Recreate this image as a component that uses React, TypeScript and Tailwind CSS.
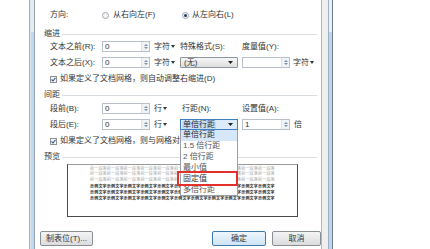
import React from "react";

const FONT = '"Liberation Sans","Noto Sans CJK SC",sans-serif';

function Spin() {
  return (
    <div className="ml-auto h-full w-[8px] border-l border-[#dde2e8] bg-[#f1f4f7] flex flex-col items-center justify-center gap-[1px]">
      <svg width="4" height="2" viewBox="0 0 4 2">
        <path d="M0 2 L2 0 L4 2Z" fill="#7d90a8" />
      </svg>
      <svg width="4" height="2" viewBox="0 0 4 2">
        <path d="M0 0 L2 2 L4 0Z" fill="#7d90a8" />
      </svg>
    </div>
  );
}

function Num({ v }: { v: string }) {
  return (
    <div className="w-[48px] h-full shrink-0 flex items-center border border-[#b9c0ca] bg-white pl-[2px]">
      <span className="leading-none">{v}</span>
      <Spin />
    </div>
  );
}

function Unit({ t }: { t: string }) {
  return (
    <span className="flex items-center leading-none">
      {t}
      <svg width="4" height="3" viewBox="0 0 4 3" className="ml-[1px]">
        <path d="M0 0H4L2 3Z" fill="#333" />
      </svg>
    </span>
  );
}

function Arrow() {
  return (
    <svg width="5" height="3" viewBox="0 0 5 3" className="ml-auto mr-[4px]">
      <path d="M0 0H5L2.5 3Z" fill="#222" />
    </svg>
  );
}

function Header({ t }: { t: string }) {
  return (
    <div className="flex items-center h-[8px] pl-[9px] pr-[4px] leading-none">
      <span>{t}</span>
      <div className="flex-1 h-px bg-[#d8dde2] ml-[2px]" />
    </div>
  );
}

function Check({ t }: { t: string }) {
  return (
    <div className="flex items-center h-[8px] pl-[15px] leading-none whitespace-nowrap">
      <div className="w-[7px] h-[7px] border border-[#8e9196] bg-[#f4f6f8] flex items-center justify-center">
        <svg width="5" height="5" viewBox="0 0 5 5">
          <path d="M0.5 2.5 L2 4 L4.5 0.8" stroke="#3d5a80" strokeWidth="1.1" fill="none" />
        </svg>
      </div>
      <span className="ml-[3px]">{t}</span>
    </div>
  );
}

function Radio({ on }: { on?: boolean }) {
  return (
    <div className="w-[7px] h-[7px] rounded-full border border-[#a3a8ae] bg-[#f3f5f7] flex items-center justify-center shrink-0">
      {on && <div className="w-[3px] h-[3px] rounded-full bg-[#1f3c62]" />}
    </div>
  );
}

const gray = "前一段落".repeat(11);
const black = "示例文字".repeat(11);

export default function App() {
  return (
    <div
      className="relative w-[430px] h-[249px] overflow-hidden bg-white flex text-[8px] text-[#333]"
      style={{ fontFamily: FONT }}
    >
      <div className="w-[29px] shrink-0" />
      {/* left frame */}
      <div className="w-[6px] shrink-0 flex">
        <div className="w-px bg-[#a9aeb4]" />
        <div className="w-px bg-[#dfe7ef]" />
        <div className="w-[3px] flex flex-col">
          <div className="h-[32px] bg-[#e6ebf0]" />
          <div className="flex-1 bg-[#bfd8f1]" />
        </div>
        <div className="w-px bg-[#97a3af]" />
      </div>

      {/* dialog body */}
      <div className="w-[286px] shrink-0 flex flex-col bg-white">
        {/* 方向 */}
        <div className="flex items-center h-[30px] pl-[15px] leading-none whitespace-nowrap">
          <span className="w-[52px]">方向:</span>
          <div className="w-[80px] flex items-center">
            <Radio />
            <span className="ml-[4px]">从右向左(F)</span>
          </div>
          <Radio on />
          <span className="ml-[3px]">从左向右(L)</span>
        </div>

        <Header t="缩进" />

        <div className="flex items-center h-[11px] mt-[3px] pl-[15px] leading-none whitespace-nowrap">
          <span className="w-[52px]">文本之前(R):</span>
          <Num v="0" />
          <div className="w-[30px] pl-[4px]">
            <Unit t="字符" />
          </div>
          <span className="w-[62px]">特殊格式(S):</span>
          <span>度量值(Y):</span>
        </div>

        <div className="flex items-center h-[11px] mt-[5px] pl-[15px] leading-none whitespace-nowrap">
          <span className="w-[52px]">文本之后(X):</span>
          <Num v="0" />
          <div className="w-[30px] pl-[4px]">
            <Unit t="字符" />
          </div>
          <div className="w-[62px] h-full">
            <div className="w-[58px] h-full flex items-center border border-[#8f959c] rounded-[1px] bg-gradient-to-b from-[#f6f6f6] to-[#dedede] pl-[3px]">
              <span>(无)</span>
              <Arrow />
            </div>
          </div>
          <Num v="" />
          <div className="pl-[3px]">
            <Unit t="字符" />
          </div>
        </div>

        <div className="mt-[7px]">
          <Check t="如果定义了文档网格，则自动调整右缩进(D)" />
        </div>

        <div className="mt-[8px]">
          <Header t="间距" />
        </div>

        <div className="flex items-center h-[11px] mt-[4px] pl-[15px] leading-none whitespace-nowrap">
          <span className="w-[52px]">段前(B):</span>
          <Num v="0" />
          <div className="w-[30px] pl-[4px]">
            <Unit t="行" />
          </div>
          <span className="w-[62px] pl-[2px]">行距(N):</span>
          <span>设置值(A):</span>
        </div>

        <div className="flex items-center h-[11px] mt-[5px] pl-[15px] leading-none whitespace-nowrap">
          <span className="w-[52px]">段后(E):</span>
          <Num v="0" />
          <div className="w-[30px] pl-[4px]">
            <Unit t="行" />
          </div>
          <div className="w-[62px] h-full">
            <div className="w-[58px] h-full flex items-center border border-[#3f7fc0] bg-[#dcebfa] pl-[1px]">
              <span className="bg-[#c4ddf6] px-[1px] text-[#1a2a40]">单倍行距</span>
              <Arrow />
            </div>
          </div>
          <Num v="1" />
          <span className="pl-[4px]">倍</span>
        </div>

        <div className="mt-[7px]">
          <Check t="如果定义了文档网格，则与网格对齐(W)" />
        </div>

        <div className="mt-[8px]">
          <Header t="预览" />
        </div>

        <div className="mt-[3px] ml-[32px] w-[231px] h-[53px] border border-[#4a4a4a] border-t-[#9a9a9a] bg-white pl-[22px] pt-[0.5px]">
          <div className="whitespace-nowrap text-[4px] leading-[5.8px] tracking-[0.2px] text-[#a8a8a8]">
            <div>{gray}</div>
            <div>{gray}</div>
            <div>{gray}</div>
          </div>
          <div className="mt-[1.2px] whitespace-nowrap text-[4px] leading-[5.8px] tracking-[0.2px] text-[#1e1e1e] font-bold">
            <div>{black}</div>
            <div>{black}</div>
            <div>{black}</div>
          </div>
        </div>

        <div className="mt-[14px] h-[15px] flex items-stretch leading-none whitespace-nowrap">
          <div className="ml-[5px] w-[53px] flex items-center justify-center border border-[#8a8f95] rounded-[2px] bg-gradient-to-b from-[#f4f4f4] to-[#dcdcdc]">
            制表位(T)...
          </div>
          <div className="ml-[119px] w-[54px] flex items-center justify-center border border-[#3d7bad] rounded-[2px] bg-gradient-to-b from-[#eef6fc] to-[#cfe4f5]">
            确定
          </div>
          <div className="ml-[6px] w-[49px] flex items-center justify-center border border-[#8a8f95] rounded-[2px] bg-gradient-to-b from-[#f4f4f4] to-[#dcdcdc]">
            取消
          </div>
        </div>
      </div>

      {/* right frame */}
      <div className="w-[12px] shrink-0 flex">
        <div className="w-px bg-[#b4b8bd]" />
        <div className="w-[6px] bg-[#efefef]" />
        <div className="w-px bg-[#9fb0c2]" />
        <div className="w-[3px] flex flex-col">
          <div className="h-[32px] bg-[#e9eef4]" />
          <div className="flex-1 bg-[#bcd6f0]" />
        </div>
        <div className="w-px bg-[#6e7b88]" />
      </div>
      <div className="flex-1" />

      {/* open dropdown list */}
      <div className="absolute left-[180px] top-[130px] w-[58px] border border-[#9aa0a6] border-t-0 bg-white leading-none whitespace-nowrap text-[#555]">
        <div className="h-[10.9px] flex items-center pl-[2px] bg-[#d6e7f8] text-[#1a2a40]">单倍行距</div>
        <div className="h-[10.9px] flex items-center pl-[2px]">1.5 倍行距</div>
        <div className="h-[10.9px] flex items-center pl-[2px]">2 倍行距</div>
        <div className="h-[10.9px] flex items-center pl-[2px]">最小值</div>
        <div className="h-[10.9px] flex items-center pl-[2px] text-[#333]">固定值</div>
        <div className="h-[10.9px] flex items-center pl-[2px]">多倍行距</div>
      </div>

      {/* red annotation box */}
      <div className="absolute left-[177px] top-[171px] w-[61px] h-[15px] border-2 border-[#e3302b]" />
    </div>
  );
}
